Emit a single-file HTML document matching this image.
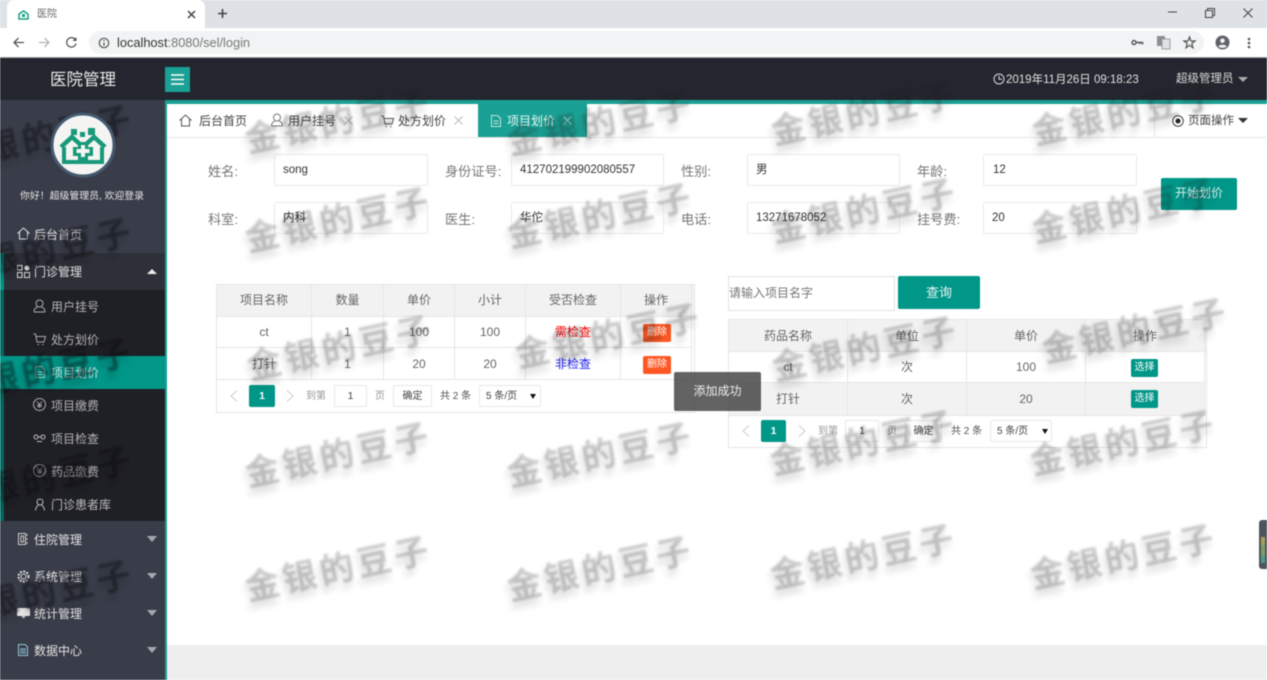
<!DOCTYPE html>
<html lang="zh"><head><meta charset="utf-8"><title>医院</title>
<style>
html,body{margin:0;padding:0;width:1267px;height:680px;overflow:hidden;background:#fff}
#r{position:relative;width:1267px;height:680px;overflow:hidden;font-family:"Liberation Sans","Noto Sans CJK SC",sans-serif;filter:blur(.45px)}
.a{position:absolute;box-sizing:border-box}
.t{position:absolute;white-space:nowrap;line-height:16px}
svg{position:absolute;overflow:visible}
.lb{font-size:13.2px;color:#777}
.in{position:absolute;box-sizing:border-box;width:154px;height:32px;border:1px solid #eaeaea;border-radius:2px;background:#fff;font-size:11.5px;color:#333;line-height:31px;padding-left:8px}
.mi{font-size:12px;color:#e4e4e4;left:34px}
.si{font-size:12px;color:#b2b2b2;left:51px}
.c{position:absolute;text-align:center;font-size:12px;color:#666;line-height:16px;white-space:nowrap}
.ln{position:absolute;background:#e6e6e6}
.wm{position:absolute;left:0;top:0;font:bold 34.5px "Liberation Sans","Noto Sans CJK SC",sans-serif;letter-spacing:3.5px;color:rgba(30,30,30,.21);white-space:nowrap;filter:blur(1.1px);text-shadow:-3px 6px 7px rgba(30,30,30,.16)}
.wd{color:rgba(10,10,15,.42);text-shadow:-3px 6px 7px rgba(10,10,15,.2)}
.arr{position:absolute;width:0;height:0;border-left:5px solid transparent;border-right:5px solid transparent}
.dn{border-top:6px solid #a5a7ad}
.badge{position:absolute;border-radius:2px;color:#fff;font-size:10px;line-height:18px;text-align:center;height:18px}
.pg{position:absolute;box-sizing:border-box;border:1px solid #e8e8e8;border-radius:2px;background:#fff;text-align:center;font-size:10.5px;color:#444;line-height:21px;height:22px}
.gp{font-size:10px;color:#999}
</style></head><body><div id="r">

<!-- browser chrome -->
<div class="a" style="left:0;top:0;width:1267px;height:28px;background:#dee1e6"></div>
<div class="a" style="left:7px;top:0;width:198px;height:28px;background:#fff;border-radius:7px 7px 0 0"></div>
<svg style="left:18px;top:9px" width="11" height="11" viewBox="0 0 11 11"><path d="M1 5L5.500 2L10 5V10H1Z" fill="none" stroke="#1a9f85" stroke-width="1.500"/><rect x="4" y="5" width="3" height="3" fill="#1a9f85"/></svg>
<div class="t" style="left:37px;top:7px;font-size:10px;color:#666">医院</div>
<svg style="left:187px;top:10px" width="9" height="9"><path d="M1 1L8 8M8 1L1 8" stroke="#444" stroke-width="1.500"/></svg>
<svg style="left:217px;top:8px" width="11" height="11"><path d="M5.500 1V10M1 5.500H10" stroke="#444" stroke-width="1.600"/></svg>
<svg style="left:1168px;top:11px" width="10" height="3"><path d="M0 1H9" stroke="#444" stroke-width="1"/></svg>
<svg style="left:1205px;top:8px" width="10" height="10" viewBox="0 0 10 10"><path d="M.5 2.500H7.500V9.500H.5ZM2.500 2.500V.5H9.500V7.500H7.500" fill="none" stroke="#444" stroke-width="1"/></svg>
<svg style="left:1243px;top:8px" width="10" height="10"><path d="M.5.5L9.500 9.500M9.500.5L.5 9.500" stroke="#444" stroke-width="1"/></svg>
<div class="a" style="left:0;top:28px;width:1267px;height:30px;background:#fff;border-bottom:1px solid #a0a0a0"></div>
<div class="a" style="left:89px;top:31px;width:1115px;height:23px;background:#f1f3f4;border-radius:12px"></div>
<svg style="left:12px;top:36px" width="13" height="13" viewBox="0 0 13 13"><path d="M12 6.500H2M6.500 2L2 6.500L6.500 11" fill="none" stroke="#555" stroke-width="1.300"/></svg>
<svg style="left:38px;top:36px" width="13" height="13" viewBox="0 0 13 13"><path d="M1 6.500H11M6.500 2L11 6.500L6.500 11" fill="none" stroke="#b5b5b5" stroke-width="1.300"/></svg>
<svg style="left:65px;top:36px" width="13" height="13" viewBox="0 0 13 13"><path d="M10.500 4A4.700 4.700 0 1 0 11 7.500" fill="none" stroke="#555" stroke-width="1.300"/><path d="M11.500 1V5H7.500Z" fill="#555"/></svg>
<svg style="left:98px;top:37px" width="12" height="12" viewBox="0 0 12 12"><circle cx="6" cy="6" r="4.700" fill="none" stroke="#555" stroke-width="1.200"/><path d="M6 5.500V9M6 3V4.400" stroke="#555" stroke-width="1.200"/></svg>
<div class="t" style="left:117px;top:35px;font-size:12.800px;color:#777"><span style="color:#333">localhost</span>:8080/sel/login</div>
<svg style="left:1131px;top:38px" width="12" height="9" viewBox="0 0 12 9"><circle cx="3" cy="4.500" r="2" fill="none" stroke="#555" stroke-width="1.400"/><path d="M5 4.500H11.500V6.500M9 4.500V6" fill="none" stroke="#555" stroke-width="1.400"/></svg>
<svg style="left:1157px;top:36px" width="13" height="13" viewBox="0 0 13 13"><rect x="0" y="0" width="8" height="10" fill="#8a8f93"/><rect x="5" y="3" width="8" height="10" fill="#dfe1e2" stroke="#8a8f93" stroke-width=".8"/></svg>
<svg style="left:1183px;top:36px" width="13" height="13" viewBox="0 0 13 13"><path d="M6.500 1L8 5H12L8.800 7.500L10 11.800L6.500 9.300L3 11.800L4.200 7.500L1 5H5Z" fill="none" stroke="#555" stroke-width="1.200"/></svg>
<svg style="left:1215px;top:35px" width="15" height="15" viewBox="0 0 15 15"><circle cx="7.500" cy="7.500" r="7" fill="#5f6368"/><circle cx="7.500" cy="5.700" r="2.300" fill="#f1f3f4"/><path d="M3.300 11.500C4.500 9.200 10.500 9.200 11.700 11.500C10 13.300 5 13.300 3.300 11.500Z" fill="#f1f3f4"/></svg>
<svg style="left:1247px;top:37px" width="4" height="12"><circle cx="2" cy="2" r="1.300" fill="#555"/><circle cx="2" cy="6" r="1.300" fill="#555"/><circle cx="2" cy="10" r="1.300" fill="#555"/></svg>

<!-- top header -->
<div class="a" style="left:0;top:58px;width:1267px;height:42px;background:#23262e"></div>
<div class="t" style="left:50px;top:71px;font-size:16.500px;color:#e8e8e8;line-height:18px">医院管理</div>
<div class="a" style="left:165px;top:67px;width:25px;height:25px;background:#1aa094"></div>
<svg style="left:171px;top:74px" width="13" height="11"><path d="M0 1H13M0 5.500H13M0 10H13" stroke="#fff" stroke-width="1.400"/></svg>
<svg style="left:993px;top:73px" width="12" height="12" viewBox="0 0 12 12"><circle cx="6" cy="6" r="5" fill="none" stroke="#ddd" stroke-width="1"/><path d="M6 2.800V6.200H9" fill="none" stroke="#ddd" stroke-width="1"/></svg>
<div class="t" style="left:1006px;top:72px;font-size:11.500px;color:#e0e0e0">2019年11月26日 09:18:23</div>
<div class="t" style="left:1176px;top:71px;font-size:11.500px;color:#dcdcdc">超级管理员</div>
<div class="arr" style="left:1238px;top:77px;border-top:5px solid #aaa;border-left-width:5px;border-right-width:5px"></div>

<!-- sidebar -->
<div class="a" style="left:0;top:100px;width:165px;height:580px;background:#393d49"></div>
<div class="a" style="left:165px;top:100px;width:2px;height:580px;background:#1aa094"></div>

<!-- sidebar watermarks sit beneath the avatar -->
<div class="wm wd" style="transform:translate(40px,135px) translate(-50%,-50%) rotate(-12deg)">金银的豆子</div>

<svg style="left:50px;top:112px" width="66" height="66" viewBox="0 0 66 66">
<circle cx="33" cy="33" r="31" fill="#f4f4f2" stroke="#445a70" stroke-width="3"/>
<path d="M14 35V50H52V35" fill="none" stroke="#17997a" stroke-width="4"/>
<path d="M11 35L22 25L33 35L44 25L55 35" fill="none" stroke="#17997a" stroke-width="4.500"/>
<path d="M28 30H38V35H43V44H38V49H28V44H23V35H28Z" fill="#17997a"/>
<path d="M31 33H35V37H39.500V41H35V45H31V41H26.500V37H31Z" fill="#f4f4f2"/>
<rect x="21" y="17" width="6" height="6" fill="#17997a"/><rect x="30" y="20" width="5" height="5" fill="#17997a"/><rect x="38" y="16" width="7" height="7" fill="#17997a"/>
</svg>
<div class="t" style="left:20px;top:189px;font-size:9.900px;color:#e8e8e8">你好！超级管理员, 欢迎登录</div>

<svg style="left:17px;top:227px" width="13" height="13" viewBox="0 0 13 13"><path d="M.5 6.500L6.500 1L12.500 6.500M2.500 5V12H10.500V5" fill="none" stroke="#ddd" stroke-width="1"/></svg>
<div class="t mi" style="top:227px">后台首页</div>

<div class="a" style="left:0;top:253px;width:165px;height:37px;background:#2e3039"></div>
<div class="a" style="left:4px;top:290px;width:161px;height:231px;background:#1f2026"></div>
<div class="a" style="left:0;top:253px;width:4px;height:37px;background:#009688"></div>
<div class="a" style="left:0;top:290px;width:4px;height:231px;background:#00695f"></div>
<div class="a" style="left:0;top:356px;width:165px;height:33px;background:#009688"></div>

<svg style="left:17px;top:265px" width="13" height="13" viewBox="0 0 13 13"><path d="M.5.5H5V5H.5ZM.5 7.500H5V12.500H.5ZM7.500 7.500H12.500V12.500H7.500Z" fill="none" stroke="#ddd" stroke-width="1"/><circle cx="10" cy="3" r="2.500" fill="#eee"/></svg>
<div class="t mi" style="top:264px">门诊管理</div>
<div class="arr" style="left:147px;top:269px;border-bottom:5px solid #eee"></div>

<svg style="left:33px;top:299px" width="13" height="14" viewBox="0 0 13 14"><circle cx="6.500" cy="4.500" r="3.500" fill="none" stroke="#aaa"/><path d="M1 13C1 9.500 3 8.500 4.500 8M12 13C12 9.500 10 8.500 8.500 8M1 13H12" fill="none" stroke="#aaa"/></svg>
<div class="t si" style="top:299px">用户挂号</div>
<svg style="left:33px;top:333px" width="13" height="12" viewBox="0 0 13 12"><path d="M.5 1H2.500L4 9H11L12.500 3.500H3M4.500 11.500H6M9 11.500H10.500" fill="none" stroke="#aaa"/></svg>
<div class="t si" style="top:332px">处方划价</div>
<svg style="left:35px;top:366px" width="10" height="12" viewBox="0 0 10 12"><path d="M.5.5H6.500L9.500 3.500V11.500H.5Z" fill="none" stroke="#a8d8d0"/><path d="M2.500 6H7.500M2.500 8.500H7.500" stroke="#a8d8d0"/></svg>
<div class="t si" style="top:365px;color:#cfe9e5">项目划价</div>
<svg style="left:33px;top:398px" width="13" height="13" viewBox="0 0 13 13"><circle cx="6.500" cy="6.500" r="6" fill="none" stroke="#aaa"/><path d="M4 3.500L6.500 6.500L9 3.500M6.500 6.500V10M4.200 7H8.800M4.200 8.500H8.800" fill="none" stroke="#aaa" stroke-width=".9"/></svg>
<div class="t si" style="top:398px">项目缴费</div>
<svg style="left:33px;top:434px" width="13" height="9" viewBox="0 0 13 9"><circle cx="3" cy="3" r="2" fill="none" stroke="#bbb"/><circle cx="10" cy="3" r="2" fill="none" stroke="#bbb"/><path d="M5 3H8M4 7.500H9" stroke="#bbb"/></svg>
<div class="t si" style="top:431px">项目检查</div>
<svg style="left:33px;top:464px" width="13" height="13" viewBox="0 0 13 13"><circle cx="6.500" cy="6.500" r="6" fill="none" stroke="#aaa"/><path d="M4 3.500L6.500 6.500L9 3.500M6.500 6.500V10M4.200 7H8.800M4.200 8.500H8.800" fill="none" stroke="#aaa" stroke-width=".9"/></svg>
<div class="t si" style="top:464px">药品缴费</div>
<svg style="left:35px;top:498px" width="10" height="13" viewBox="0 0 10 13"><circle cx="5" cy="4" r="3" fill="none" stroke="#bbb"/><path d="M.5 12.500C.5 9 3 7.500 3.500 7M9.500 12.500C9.500 9 7 7.500 6.500 7" fill="none" stroke="#bbb"/></svg>
<div class="t si" style="top:497px;color:#bcbcbc">门诊患者库</div>

<svg style="left:18px;top:533px" width="11" height="12" viewBox="0 0 11 12"><path d="M.5.5H7.500V11.500H.5Z" fill="none" stroke="#ccc"/><path d="M3 3V9H5.500V3ZM9 1V3M9 5V7M9 9V11" fill="none" stroke="#ccc"/></svg>
<div class="t mi" style="top:532px">住院管理</div>
<div class="arr dn" style="left:147px;top:536px"></div>
<svg style="left:17px;top:570px" width="13" height="13" viewBox="0 0 13 13"><circle cx="6.500" cy="6.500" r="2.500" fill="none" stroke="#ddd"/><circle cx="6.500" cy="6.500" r="5" fill="none" stroke="#ddd" stroke-width="2" stroke-dasharray="2 1.300"/></svg>
<div class="t mi" style="top:569px">系统管理</div>
<div class="arr dn" style="left:147px;top:573px"></div>
<svg style="left:17px;top:608px" width="13" height="11" viewBox="0 0 13 11"><rect x="0" y="0" width="13" height="8" rx="1" fill="#eee"/><path d="M5 8H8V10H5Z" fill="#bbb"/></svg>
<div class="t mi" style="top:606px">统计管理</div>
<div class="arr dn" style="left:147px;top:610px"></div>
<svg style="left:18px;top:644px" width="10" height="12" viewBox="0 0 10 12"><path d="M.5.5H7L9.500 3V11.500H.5Z" fill="none" stroke="#8fc6d6"/><path d="M2 5H8M2 7H8M2 9H8" stroke="#8fc6d6"/></svg>
<div class="t mi" style="top:643px">数据中心</div>
<div class="arr dn" style="left:147px;top:647px"></div>

<!-- main -->
<div class="a" style="left:167px;top:100px;width:1100px;height:4px;background:#1aa094"></div>
<div class="a" style="left:167px;top:137px;width:1100px;height:1px;background:#e6e6e6"></div>
<div class="a" style="left:167px;top:645px;width:1100px;height:35px;background:#eee"></div>

<svg style="left:179px;top:114px" width="13" height="13" viewBox="0 0 13 13"><path d="M.5 6.500L6.500 1L12.500 6.500M2.500 5V12H10.500V5" fill="none" stroke="#555" stroke-width="1"/></svg>
<div class="t" style="left:199px;top:113px;font-size:12px;color:#444">后台首页</div>
<svg style="left:270px;top:113px" width="14" height="14" viewBox="0 0 13 14"><circle cx="6.500" cy="4.500" r="3.500" fill="none" stroke="#777"/><path d="M1 13C1 9.500 3 8.500 4.500 8M12 13C12 9.500 10 8.500 8.500 8M1 13H12" fill="none" stroke="#777"/></svg>
<div class="t" style="left:288px;top:113px;font-size:12px;color:#444">用户挂号</div>
<svg style="left:344px;top:116px" width="9" height="9"><path d="M.5.5L8.500 8.500M8.500.5L.5 8.500" stroke="#bbb"/></svg>
<svg style="left:381px;top:115px" width="13" height="12" viewBox="0 0 13 12"><path d="M.5 1H2.500L4 9H11L12.500 3.500H3M4.500 11.500H6M9 11.500H10.500" fill="none" stroke="#555"/></svg>
<div class="t" style="left:398px;top:113px;font-size:12px;color:#444">处方划价</div>
<svg style="left:454px;top:116px" width="9" height="9"><path d="M.5.5L8.500 8.500M8.500.5L.5 8.500" stroke="#bbb"/></svg>
<div class="a" style="left:478px;top:104px;width:109px;height:33px;background:#1aa094"></div>
<svg style="left:491px;top:115px" width="10" height="12" viewBox="0 0 10 12"><path d="M.5.5H6.500L9.500 3.500V11.500H.5Z" fill="none" stroke="#bfe5df"/><path d="M2.500 6H7.500M2.500 8.500H7.500" stroke="#bfe5df"/></svg>
<div class="t" style="left:507px;top:113px;font-size:12px;color:#e9f6f4">项目划价</div>
<svg style="left:563px;top:116px" width="9" height="9"><path d="M.5.5L8.500 8.500M8.500.5L.5 8.500" stroke="#a6dcd5"/></svg>
<div class="a" style="left:1154px;top:104px;width:1px;height:33px;background:#e6e6e6"></div>
<svg style="left:1172px;top:115px" width="12" height="12"><circle cx="6" cy="6" r="5.300" fill="none" stroke="#444"/><circle cx="6" cy="6" r="2.500" fill="#222"/></svg>
<div class="t" style="left:1188px;top:113px;font-size:11.500px;color:#444">页面操作</div>
<div class="arr" style="left:1238px;top:118px;border-top:5px solid #333"></div>

<!-- form -->
<div class="t lb" style="left:208px;top:164px">姓名:</div><div class="in" style="left:274px;top:154px">song</div>
<div class="t lb" style="left:445px;top:164px">身份证号:</div><div class="in" style="left:511px;top:154px;width:153px">412702199902080557</div>
<div class="t lb" style="left:681px;top:164px">性别:</div><div class="in" style="left:747px;top:154px;width:153px">男</div>
<div class="t lb" style="left:917px;top:164px">年龄:</div><div class="in" style="left:983px;top:154px;padding-left:9px">12</div>
<div class="t lb" style="left:208px;top:212px">科室:</div><div class="in" style="left:274px;top:202px">内科</div>
<div class="t lb" style="left:445px;top:212px">医生:</div><div class="in" style="left:511px;top:202px;width:153px">华佗</div>
<div class="t lb" style="left:681px;top:212px">电话:</div><div class="in" style="left:747px;top:202px;width:153px">13271678052</div>
<div class="t lb" style="left:917px;top:212px">挂号费:</div><div class="in" style="left:983px;top:202px">20</div>
<div class="a" style="left:1161px;top:178px;width:76px;height:32px;background:#009688;border-radius:2px;color:#dff3f0;font-size:12px;line-height:30px;text-align:center">开始划价</div>

<!-- left table -->
<div class="a" style="left:216px;top:284px;width:479px;height:129px;border:1px solid #e6e6e6;background:#fff"></div>
<div class="a" style="left:217px;top:285px;width:477px;height:31px;background:#f2f2f2"></div>
<div class="ln" style="left:217px;top:316px;width:474px;height:1px"></div>
<div class="ln" style="left:217px;top:347px;width:474px;height:1px"></div>
<div class="ln" style="left:217px;top:379px;width:477px;height:1px"></div>
<div class="ln" style="left:311px;top:285px;width:1px;height:94px"></div>
<div class="ln" style="left:383px;top:285px;width:1px;height:94px"></div>
<div class="ln" style="left:454px;top:285px;width:1px;height:94px"></div>
<div class="ln" style="left:525px;top:285px;width:1px;height:94px"></div>
<div class="ln" style="left:620px;top:285px;width:1px;height:94px"></div>
<div class="ln" style="left:691px;top:285px;width:1px;height:94px"></div>
<div class="c" style="left:217px;top:292px;width:94px">项目名称</div>
<div class="c" style="left:312px;top:292px;width:71px">数量</div>
<div class="c" style="left:384px;top:292px;width:70px">单价</div>
<div class="c" style="left:455px;top:292px;width:70px">小计</div>
<div class="c" style="left:526px;top:292px;width:94px">受否检查</div>
<div class="c" style="left:621px;top:292px;width:70px">操作</div>
<div class="c" style="left:217px;top:324px;width:94px">ct</div>
<div class="c" style="left:312px;top:324px;width:71px">1</div>
<div class="c" style="left:384px;top:324px;width:70px">100</div>
<div class="c" style="left:455px;top:324px;width:70px">100</div>
<div class="c" style="left:526px;top:324px;width:94px;color:#f00">需检查</div>
<div class="badge" style="left:643px;top:324px;width:28px;background:#ff5722">删除</div>
<div class="c" style="left:217px;top:356px;width:94px">打针</div>
<div class="c" style="left:312px;top:356px;width:71px">1</div>
<div class="c" style="left:384px;top:356px;width:70px">20</div>
<div class="c" style="left:455px;top:356px;width:70px">20</div>
<div class="c" style="left:526px;top:356px;width:94px;color:#22f">非检查</div>
<div class="badge" style="left:643px;top:356px;width:28px;background:#ff5722">删除</div>
<svg style="left:230px;top:390px" width="8" height="12"><path d="M7 .5L1 6L7 11.500" fill="none" stroke="#ccc"/></svg>
<div class="a" style="left:249px;top:385px;width:26px;height:22px;background:#009688;border-radius:2px;color:#fff;font-size:10.500px;font-weight:bold;line-height:22px;text-align:center">1</div>
<svg style="left:286px;top:390px" width="8" height="12"><path d="M1 .5L7 6L1 11.500" fill="none" stroke="#ccc"/></svg>
<div class="t gp" style="left:306px;top:389px">到第</div>
<div class="pg" style="left:334px;top:385px;width:33px">1</div>
<div class="t gp" style="left:375px;top:389px">页</div>
<div class="pg" style="left:393px;top:385px;width:39px;font-size:10px">确定</div>
<div class="t" style="left:440px;top:389px;font-size:10px;color:#555">共 2 条</div>
<div class="pg" style="left:479px;top:385px;width:62px;text-align:left;padding-left:6px;font-size:10px">5 条/页</div>
<div class="arr" style="left:530px;top:394px;border-top:5px solid #111;border-left-width:3px;border-right-width:3px"></div>

<!-- search -->
<div class="a" style="left:728px;top:276px;width:167px;height:35px;border:1px solid #e2e2e2;background:#fff;font-size:12px;color:#777;line-height:32px;white-space:nowrap">请输入项目名字</div>
<div class="a" style="left:898px;top:276px;width:82px;height:33px;background:#009688;border-radius:2px;color:#e8f6f4;font-size:13px;line-height:33px;text-align:center">查询</div>

<!-- right table -->
<div class="a" style="left:728px;top:319px;width:479px;height:129px;border:1px solid #e6e6e6;background:#fff"></div>
<div class="a" style="left:729px;top:320px;width:477px;height:31px;background:#f2f2f2"></div>
<div class="a" style="left:729px;top:383px;width:475px;height:32px;background:#f2f2f2"></div>
<div class="ln" style="left:729px;top:351px;width:477px;height:1px"></div>
<div class="ln" style="left:729px;top:382px;width:475px;height:1px"></div>
<div class="ln" style="left:729px;top:415px;width:477px;height:1px"></div>
<div class="ln" style="left:847px;top:320px;width:1px;height:95px"></div>
<div class="ln" style="left:966px;top:320px;width:1px;height:95px"></div>
<div class="ln" style="left:1085px;top:320px;width:1px;height:95px"></div>
<div class="ln" style="left:1204px;top:320px;width:1px;height:95px"></div>
<div class="c" style="left:729px;top:328px;width:118px">药品名称</div>
<div class="c" style="left:848px;top:328px;width:118px">单位</div>
<div class="c" style="left:967px;top:328px;width:118px">单价</div>
<div class="c" style="left:1086px;top:328px;width:118px">操作</div>
<div class="c" style="left:729px;top:359px;width:118px">ct</div>
<div class="c" style="left:848px;top:359px;width:118px">次</div>
<div class="c" style="left:967px;top:359px;width:118px">100</div>
<div class="badge" style="left:1131px;top:359px;width:27px;background:#009688">选择</div>
<div class="c" style="left:729px;top:391px;width:118px">打针</div>
<div class="c" style="left:848px;top:391px;width:118px">次</div>
<div class="c" style="left:967px;top:391px;width:118px">20</div>
<div class="badge" style="left:1131px;top:390px;width:27px;background:#009688">选择</div>
<svg style="left:742px;top:425px" width="8" height="12"><path d="M7 .5L1 6L7 11.500" fill="none" stroke="#ccc"/></svg>
<div class="a" style="left:761px;top:420px;width:25px;height:22px;background:#009688;border-radius:2px;color:#fff;font-size:10.500px;font-weight:bold;line-height:22px;text-align:center">1</div>
<svg style="left:798px;top:425px" width="8" height="12"><path d="M1 .5L7 6L1 11.500" fill="none" stroke="#ccc"/></svg>
<div class="t gp" style="left:818px;top:424px">到第</div>
<div class="pg" style="left:845px;top:420px;width:34px">1</div>
<div class="t gp" style="left:887px;top:424px">页</div>
<div class="pg" style="left:905px;top:420px;width:37px;font-size:10px">确定</div>
<div class="t" style="left:951px;top:424px;font-size:10px;color:#555">共 2 条</div>
<div class="pg" style="left:990px;top:420px;width:62px;text-align:left;padding-left:6px;font-size:10px">5 条/页</div>
<div class="arr" style="left:1042px;top:429px;border-top:5px solid #111;border-left-width:3px;border-right-width:3px"></div>

<!-- side widget -->
<div class="a" style="left:1259px;top:520px;width:12px;height:49px;background:#4f535c;border-radius:3px"></div>
<div class="a" style="left:1261px;top:537px;width:4px;height:8px;background:#a89f55"></div>
<div class="a" style="left:1261px;top:545px;width:4px;height:11px;background:#7c9d68"></div>
<div class="a" style="left:1261px;top:556px;width:4px;height:7px;background:#4c9c8a"></div>

<!-- watermarks -->
<div class="wm wd" style="transform:translate(40px,248px) translate(-50%,-50%) rotate(-12deg)">金银的豆子</div>
<div class="wm wd" style="transform:translate(40px,368px) translate(-50%,-50%) rotate(-12deg)">金银的豆子</div>
<div class="wm wd" style="transform:translate(40px,476px) translate(-50%,-50%) rotate(-12deg)">金银的豆子</div>
<div class="wm wd" style="transform:translate(40px,590px) translate(-50%,-50%) rotate(-12deg)">金银的豆子</div>

<div class="wm" style="transform:translate(338px,118px) translate(-50%,-50%) rotate(-12deg)">金银的豆子</div>
<div class="wm" style="transform:translate(338px,217px) translate(-50%,-50%) rotate(-12deg)">金银的豆子</div>
<div class="wm" style="transform:translate(340px,345px) translate(-50%,-50%) rotate(-12deg)">金银的豆子</div>
<div class="wm" style="transform:translate(338px,452px) translate(-50%,-50%) rotate(-12deg)">金银的豆子</div>
<div class="wm" style="transform:translate(338px,566px) translate(-50%,-50%) rotate(-12deg)">金银的豆子</div>

<div class="wm" style="transform:translate(600px,120px) translate(-50%,-50%) rotate(-12deg)">金银的豆子</div>
<div class="wm" style="transform:translate(600px,213px) translate(-50%,-50%) rotate(-12deg)">金银的豆子</div>
<div class="wm" style="transform:translate(608px,333px) translate(-50%,-50%) rotate(-12deg)">金银的豆子</div>
<div class="wm" style="transform:translate(600px,452px) translate(-50%,-50%) rotate(-12deg)">金银的豆子</div>
<div class="wm" style="transform:translate(600px,566px) translate(-50%,-50%) rotate(-12deg)">金银的豆子</div>

<div class="wm" style="transform:translate(864px,110px) translate(-50%,-50%) rotate(-12deg)">金银的豆子</div>
<div class="wm" style="transform:translate(864px,208px) translate(-50%,-50%) rotate(-12deg)">金银的豆子</div>
<div class="wm" style="transform:translate(865px,346px) translate(-50%,-50%) rotate(-12deg)">金银的豆子</div>
<div class="wm" style="transform:translate(863px,440px) translate(-50%,-50%) rotate(-12deg)">金银的豆子</div>
<div class="wm" style="transform:translate(863px,554px) translate(-50%,-50%) rotate(-12deg)">金银的豆子</div>

<div class="wm" style="transform:translate(1125px,110px) translate(-50%,-50%) rotate(-12deg)">金银的豆子</div>
<div class="wm" style="transform:translate(1125px,208px) translate(-50%,-50%) rotate(-12deg)">金银的豆子</div>
<div class="wm" style="transform:translate(1135px,328px) translate(-50%,-50%) rotate(-12deg)">金银的豆子</div>
<div class="wm" style="transform:translate(1123px,440px) translate(-50%,-50%) rotate(-12deg)">金银的豆子</div>
<div class="wm" style="transform:translate(1123px,554px) translate(-50%,-50%) rotate(-12deg)">金银的豆子</div>

<!-- toast -->
<div class="a" style="left:674px;top:372px;width:87px;height:39px;background:rgba(60,60,60,.8);border-radius:2px;color:#eee;font-size:12px;line-height:39px;text-align:center">添加成功</div>

</div></body></html>
